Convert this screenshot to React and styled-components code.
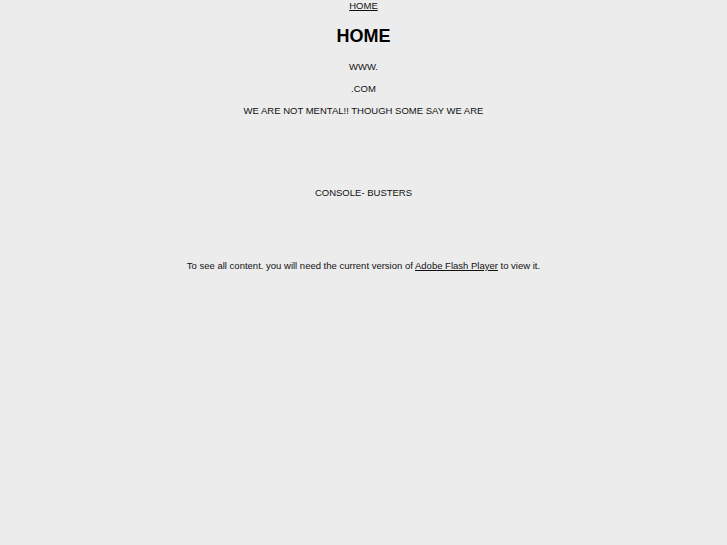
import React from 'react';
import styled, { createGlobalStyle } from 'styled-components';

const GlobalStyle = createGlobalStyle`
  html, body {
    margin: 0;
    padding: 0;
    background: #ececec;
  }
  body {
    font-family: "Liberation Sans", Arial, sans-serif;
    color: #111;
  }
`;

const Page = styled.div`
  display: flex;
  flex-direction: column;
  align-items: center;
  min-height: 545px;
  text-align: center;
`;

const Line = styled.div`
  font-size: 9.5px;
  line-height: 12px;
  height: 12px;
  margin-top: ${p => p.gap || 0}px;
  white-space: nowrap;
`;

const Heading = styled.h1`
  font-size: 18px;
  line-height: 22px;
  font-weight: bold;
  margin: 13px 0 0;
  color: #000;
`;

const StyledLink = styled.a`
  color: #111;
  text-decoration: underline;
`;

const App = () => (
  <>
    <GlobalStyle />
    <Page>
      <Line>
        <StyledLink href="#">HOME</StyledLink>
      </Line>
      <Heading>HOME</Heading>
      <Line gap={14}>WWW.</Line>
      <Line gap={10}>.COM</Line>
      <Line gap={10}>WE ARE NOT MENTAL!! THOUGH SOME SAY WE ARE</Line>
      <Line gap={70}>CONSOLE- BUSTERS</Line>
      <Line gap={61}>
        To see all content. you will need the current version of{' '}
        <StyledLink href="#">Adobe Flash Player</StyledLink> to view it.
      </Line>
    </Page>
  </>
);

export default App;
